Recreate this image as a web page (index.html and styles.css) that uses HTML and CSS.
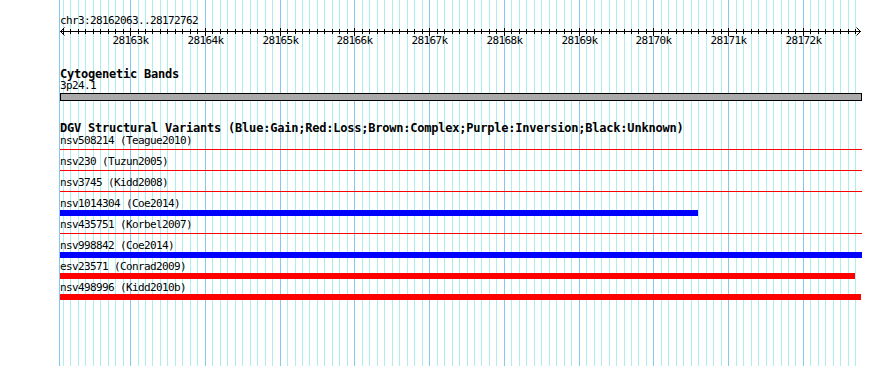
FILE: index.html
```html
<!DOCTYPE html>
<html lang="en">
<head>
  <meta charset="UTF-8">
  <title>chr3:28162063..28172762</title>
  <link rel="stylesheet" href="styles.css">
</head>
<body>
  <div id="panel">
    <svg id="grid" width="890" height="366"></svg>

    <div id="tracks">
      <svg id="ruler" width="802" height="52"></svg>

      <div class="track" id="cytobands">
        <div class="track-title">Cytogenetic Bands</div>
        <div class="label">3p24.1</div>
        <div class="band"></div>
      </div>

      <div class="track" id="dgv">
        <div class="track-title">DGV Structural Variants (Blue:Gain;Red:Loss;Brown:Complex;Purple:Inversion;Black:Unknown)</div>
        <div id="variants"></div>
      </div>
    </div>
  </div>

  <script>
    const ref = "chr3";
    const start = 28162063;
    const end = 28172762;
    const scale = 800 / (end - start + 1);
    const SVG = "http://www.w3.org/2000/svg";

    function toX(bp) {
      return Math.round((bp - start) * scale);
    }

    function svgEl(tag, attrs) {
      const el = document.createElementNS(SVG, tag);
      for (const [k, v] of Object.entries(attrs)) el.setAttribute(k, v);
      return el;
    }

    // grid behind the tracks
    const grid = document.getElementById("grid");
    grid.appendChild(svgEl("rect", { x: 59, y: 0, width: 1, height: 366, class: "major" }));
    for (let bp = Math.ceil(start / 100) * 100; bp <= end; bp += 100) {
      const cls = bp % 1000 === 0 ? "major" : "minor";
      grid.appendChild(svgEl("rect", { x: 60 + toX(bp), y: 0, width: 1, height: 366, class: cls }));
    }

    // ruler
    const ruler = document.getElementById("ruler");
    const title = svgEl("text", { x: 0, y: 24, class: "ruler-title" });
    title.textContent = `${ref}:${start}..${end}`;
    ruler.appendChild(title);
    ruler.appendChild(svgEl("rect", { x: 0, y: 31, width: 801, height: 1, class: "ink" }));
    ruler.appendChild(svgEl("path", { d: "M4.5 27.5 L0.5 31.5 L4.5 35.5", class: "arrow" }));
    ruler.appendChild(svgEl("path", { d: "M796.5 27.5 L800.5 31.5 L796.5 35.5", class: "arrow" }));

    for (let bp = Math.ceil(start / 100) * 100; bp <= end; bp += 100) {
      const x = toX(bp);
      if (bp % 1000 === 0) {
        ruler.appendChild(svgEl("rect", { x: x, y: 28, width: 1, height: 8, class: "ink" }));
        const label = svgEl("text", { x: x + 0.5, y: 44, class: "tick-label" });
        label.textContent = `${bp / 1000}k`;
        ruler.appendChild(label);
      } else {
        ruler.appendChild(svgEl("rect", { x: x, y: 29, width: 1, height: 5, class: "ink" }));
      }
    }

    // DGV variants: name, glyph, colour, drawn width
    const variants = [
      ["nsv508214 (Teague2010)", "line", "red", 802],
      ["nsv230 (Tuzun2005)", "line", "red", 802],
      ["nsv3745 (Kidd2008)", "line", "red", 802],
      ["nsv1014304 (Coe2014)", "bar", "blue", 638],
      ["nsv435751 (Korbel2007)", "line", "red", 802],
      ["nsv998842 (Coe2014)", "bar", "blue", 802],
      ["esv23571 (Conrad2009)", "bar", "red", 795],
      ["nsv498996 (Kidd2010b)", "bar", "red", 801]
    ];

    const variantsDiv = document.getElementById("variants");

    for (const [name, glyph, color, width] of variants) {
      const row = document.createElement("div");
      row.className = "variant";

      const label = document.createElement("div");
      label.className = "label";
      label.textContent = name;

      const feature = document.createElement("div");
      feature.className = `feature ${glyph} ${color}`;
      feature.style.width = `${width}px`;

      row.appendChild(label);
      row.appendChild(feature);
      variantsDiv.appendChild(row);
    }
  </script>
</body>
</html>
```

FILE: styles.css
```css
body {
  margin: 0;
  background: #fff;
  color: #000;
  font-family: "DejaVu Sans Mono", monospace;
}

#panel {
  position: relative;
  width: 890px;
  height: 366px;
  overflow: hidden;
}

#grid {
  position: absolute;
  left: 0;
  top: 0;
  shape-rendering: crispEdges;
}

#grid .minor {
  fill: #afeeee;
}

#grid .major {
  fill: #87c6ee;
}

#tracks {
  position: relative;
  padding-left: 60px;
}

#ruler {
  display: block;
  overflow: visible;
}

#ruler .ink {
  fill: #000;
  shape-rendering: crispEdges;
}

#ruler .arrow {
  fill: none;
  stroke: #000;
  stroke-width: 1;
}

.ruler-title,
.tick-label {
  font-family: "DejaVu Sans Mono", monospace;
  font-size: 11px;
  letter-spacing: -0.62px;
  fill: #000;
}

.tick-label {
  text-anchor: middle;
}

.track {
  display: flex;
  flex-direction: column;
  align-items: flex-start;
}

.track-title {
  font-size: 12px;
  font-weight: bold;
  line-height: 12px;
  letter-spacing: -0.22px;
  white-space: nowrap;
  margin: -1px 0 1px;
}

.label {
  font-size: 11px;
  line-height: 11px;
  letter-spacing: -0.62px;
  white-space: nowrap;
  margin: -1px 0 1px;
}

#cytobands {
  margin-top: 17px;
}

.band {
  box-sizing: border-box;
  width: 802px;
  height: 8px;
  margin-top: 1px;
  background: #aaaaaa;
  border: 1px solid #000;
}

#dgv {
  margin-top: 22px;
}

#variants {
  margin-top: 1px;
}

.variant {
  display: flex;
  flex-direction: column;
  align-items: flex-start;
  height: 21px;
}

.feature.line {
  height: 1px;
  margin-top: 2px;
}

.feature.bar {
  height: 6px;
}

.feature.red {
  background: #ff0000;
}

.feature.blue {
  background: #0000ff;
}
```
